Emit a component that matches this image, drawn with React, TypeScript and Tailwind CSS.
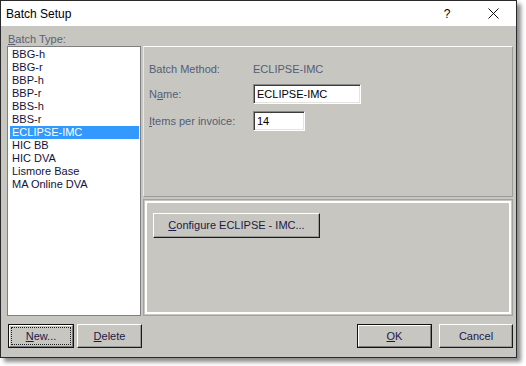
import React from "react";

const batchTypes = [
  "BBG-h",
  "BBG-r",
  "BBP-h",
  "BBP-r",
  "BBS-h",
  "BBS-r",
  "ECLIPSE-IMC",
  "HIC BB",
  "HIC DVA",
  "Lismore Base",
  "MA Online DVA",
];

function RaisedButton({ children, className = "" }: { children: React.ReactNode; className?: string }) {
  return (
    <button
      className={`h-[24px] flex items-center justify-center bg-[#c8c6c0] border border-t-white border-l-white border-r-[#1a1a1a] border-b-[#1a1a1a] shadow-[inset_-1px_-1px_0_#9a9a9a] text-[11px] text-[#1a1a48] ${className}`}
    >
      {children}
    </button>
  );
}

function DefaultButton({ children, className = "", focused = false }: { children: React.ReactNode; className?: string; focused?: boolean }) {
  return (
    <button className={`h-[24px] flex p-0 border border-[#111] bg-[#c8c6c0] text-[11px] text-[#1a1a48] ${className}`}>
      <span className="flex-1 flex border border-t-white border-l-white border-r-[#7a7a7a] border-b-[#7a7a7a]">
        <span
          className={`flex-1 flex items-center justify-center m-[1px] border border-dotted ${focused ? "border-[#222]" : "border-transparent"}`}
        >
          {children}
        </span>
      </span>
    </button>
  );
}

function Field({ value, className = "" }: { value: string; className?: string }) {
  return (
    <div
      className={`h-[20px] flex items-center pl-[3px] bg-white border border-t-[#8a8a8a] border-l-[#8a8a8a] border-r-white border-b-white shadow-[inset_1px_1px_0_#3c3c3c,inset_-1px_-1px_0_#e4e3df] text-[11px] text-black ${className}`}
    >
      {value}
    </div>
  );
}

export default function App() {
  return (
    <div className="w-[526px] h-[366px] bg-white font-[Liberation_Sans,Arial,sans-serif]">
      <div className="w-[517px] h-[358px] flex flex-col border border-[#2a2a2a] shadow-[4px_4px_4px_rgba(0,0,0,0.45)]">
        {/* title bar */}
        <div className="h-[25px] flex items-center bg-white pl-[5px]">
          <span className="text-[12px] text-black">Batch Setup</span>
          <div className="ml-auto flex items-center h-full">
            <span className="w-[46px] text-center text-[12px] text-black">?</span>
            <span className="w-[46px] flex items-center justify-center">
              <svg width="11" height="11" viewBox="0 0 11 11">
                <path d="M0.5 0.5 L10.5 10.5 M10.5 0.5 L0.5 10.5" stroke="#111" strokeWidth="1" fill="none" />
              </svg>
            </span>
          </div>
        </div>

        {/* body */}
        <div className="flex-1 flex flex-col bg-[#c8c6c0] pt-[7px] pl-[6px] pr-[3px] pb-[9px]">
          <div className="h-[13px] leading-[13px] pl-[1px] text-[11px] text-[#5a6072]">
            <u>B</u>atch Type:
          </div>

          <div className="h-[270px] flex gap-[2px]">
            <div className="w-[134px] bg-white border border-[#7f7f7f] pt-[1px] pl-[2px] pr-[1px]">
              {batchTypes.map((t) => (
                <div
                  key={t}
                  className={`h-[13px] leading-[13px] pl-[2px] text-[11px] ${
                    t === "ECLIPSE-IMC" ? "bg-[#3399ff] text-white" : "text-[#12123a]"
                  }`}
                >
                  {t}
                </div>
              ))}
            </div>

            <div className="flex-1 flex flex-col gap-[2px]">
              <div className="h-[151px] flex flex-col gap-[8px] pt-[16px] pl-[5px] border border-t-white border-l-[#e8e7e3] border-r-[#9c9c9c] border-b-[#9c9c9c] text-[11px] text-[#535d78]">
                <div className="h-[13px] flex items-center">
                  <span className="w-[104px]">Batch Method:</span>
                  <span>ECLIPSE-IMC</span>
                </div>
                <div className="flex flex-col gap-[7px]">
                  <div className="flex items-center">
                    <span className="w-[104px]">
                      N<u>a</u>me:
                    </span>
                    <Field value="ECLIPSE-IMC" className="w-[108px]" />
                  </div>
                  <div className="flex items-center">
                    <span className="w-[104px]">
                      <u>I</u>tems per invoice:
                    </span>
                    <Field value="14" className="w-[52px]" />
                  </div>
                </div>
              </div>

              <div className="flex-1 pt-[13px] pl-[9px] border border-[#a2a2a2] shadow-[inset_0_0_0_1px_#c8c6c0,inset_0_0_0_3px_#ffffff]">
                <RaisedButton className="w-[167px] h-[25px]">
                  <span>
                    <u>C</u>onfigure ECLIPSE - IMC...
                  </span>
                </RaisedButton>
              </div>
            </div>
          </div>

          <div className="mt-[8px] flex items-center">
            <DefaultButton className="w-[66px] ml-[1px]" focused>
              <span>
                <u>N</u>ew...
              </span>
            </DefaultButton>
            <RaisedButton className="w-[65px] ml-[3px]">
              <span>
                <u>D</u>elete
              </span>
            </RaisedButton>
            <DefaultButton className="w-[75px] ml-auto">
              <span>
                <u>O</u>K
              </span>
            </DefaultButton>
            <RaisedButton className="w-[74px] ml-[7px]">Cancel</RaisedButton>
          </div>
        </div>
      </div>
    </div>
  );
}
